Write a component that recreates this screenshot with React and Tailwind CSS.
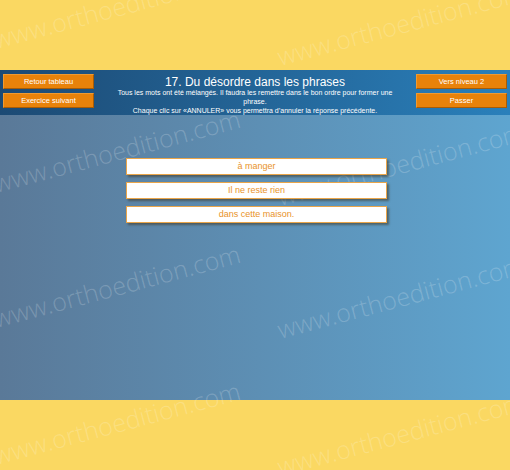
import React from 'react';

const marks = [
  'left-[-3px] top-[27px]',
  'left-[281px] top-[44px]',
  'left-[-3px] top-[171px]',
  'left-[281px] top-[184px]',
  'left-[-3px] top-[306px]',
  'left-[281px] top-[317px]',
  'left-[-3px] top-[443px]',
  'left-[281px] top-[454px]',
];

const words = ['à manger', 'Il ne reste rien', 'dans cette maison.'];

const OrangeButton = ({ children }) => (
  <button className="h-[15px] w-full bg-[#e8820a] border border-[#a85c06] border-t-[#f09a30] border-l-[#f09a30] text-white text-[7.5px] leading-none">
    {children}
  </button>
);

const App = () => {
  return (
    <div className="relative w-[510px] h-[470px] overflow-hidden bg-[#fad862] font-['Liberation_Sans',Arial,sans-serif]">
      <div className="h-[70px]" />

      <div className="relative z-20 h-[45px] bg-gradient-to-r from-[#1c4a74] to-[#2a80bb] grid grid-cols-[91px_1fr_91px] px-[3px] pt-[4px] pb-[7px]">
        <div className="flex flex-col gap-[4px]">
          <OrangeButton>Retour tableau</OrangeButton>
          <OrangeButton>Exercice suivant</OrangeButton>
        </div>
        <div className="text-center text-white">
          <h1 className="text-[12px] leading-[14px] mt-[1px]">17. Du désordre dans les phrases</h1>
          <p className="text-[7px] leading-[8.8px] px-[14px]">
            Tous les mots ont été mélangés. Il faudra les remettre dans le bon ordre pour former une phrase.
            <br />
            Chaque clic sur «ANNULER» vous permettra d’annuler la réponse précédente.
          </p>
        </div>
        <div className="flex flex-col gap-[4px]">
          <OrangeButton>Vers niveau 2</OrangeButton>
          <OrangeButton>Passer</OrangeButton>
        </div>
      </div>

      <div className="h-[285px] bg-gradient-to-r from-[#5a7998] to-[#5ea5d0] pt-[43px]">
        <div className="relative z-20 w-[261px] ml-[126px] flex flex-col gap-[7px]">
          {words.map((w) => (
            <div
              key={w}
              className="h-[17px] bg-white border border-[#e9a54a] shadow-[2px_2px_2px_rgba(60,45,20,0.5)] flex items-center justify-center text-[9px] text-[#e9932a]"
            >
              {w}
            </div>
          ))}
        </div>
      </div>

      <div className="pointer-events-none absolute inset-0 z-10">
        {marks.map((m) => (
          <div
            key={m}
            className={`absolute ${m} origin-bottom-left rotate-[-15deg] whitespace-nowrap text-[25px] leading-none font-light text-white/20 font-['Open_Sans',sans-serif]`}
          >
            www.orthoedition.com
          </div>
        ))}
      </div>
    </div>
  );
};

export default App;
